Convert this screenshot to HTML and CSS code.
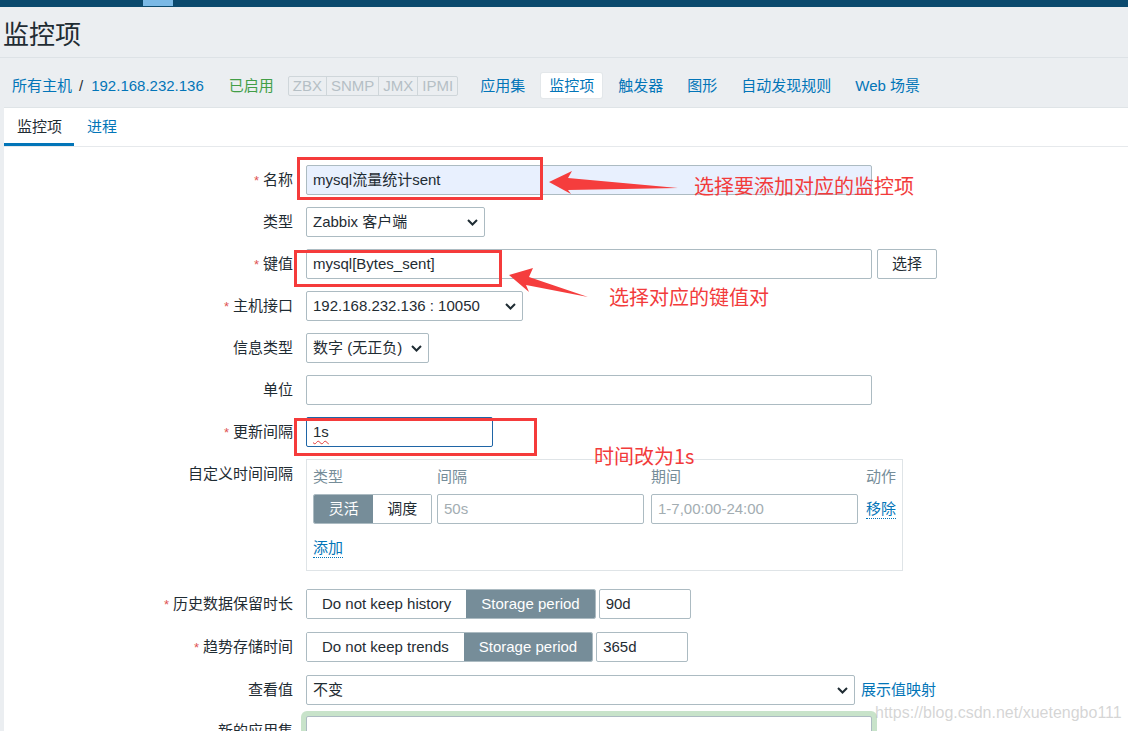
FILE: index.html
```html
<!DOCTYPE html>
<html lang="zh-CN">
<head>
<meta charset="utf-8">
<title>监控项</title>
<link rel="stylesheet" href="styles.css">
</head>
<body>
<div class="topbar"><span class="topbar-mark"></span></div>
<header class="page-head"><h1>监控项</h1></header>
<nav class="host-nav">
  <a class="link">所有主机</a><span class="sep">/</span><a class="link">192.168.232.136</a>
  <span class="status-on">已启用</span>
  <span class="avail"><span>ZBX</span><span>SNMP</span><span>JMX</span><span>IPMI</span></span>
  <ul class="host-tabs">
    <li>应用集</li>
    <li class="active">监控项</li>
    <li>触发器</li>
    <li>图形</li>
    <li>自动发现规则</li>
    <li>Web 场景</li>
  </ul>
</nav>
<main class="content">
  <div class="tabs"><span class="tab active">监控项</span><span class="tab">进程</span></div>
  <div class="form">
    <div class="row"><label class="lbl"><i class="req">*</i>名称</label><div class="input autofill w-full">mysql流量统计sent</div></div>
    <div class="row"><label class="lbl">类型</label><div class="select w-type"><span>Zabbix 客户端</span><svg class="chev" width="11" height="7" viewBox="0 0 11 7"><path d="M1 1 L5.5 5.5 L10 1" fill="none" stroke="#1f2c33" stroke-width="2"/></svg></div></div>
    <div class="row"><label class="lbl"><i class="req">*</i>键值</label><div class="input w-full">mysql[Bytes_sent]</div><span class="btn">选择</span></div>
    <div class="row"><label class="lbl"><i class="req">*</i>主机接口</label><div class="select w-iface"><span>192.168.232.136 : 10050</span><svg class="chev" width="11" height="7" viewBox="0 0 11 7"><path d="M1 1 L5.5 5.5 L10 1" fill="none" stroke="#1f2c33" stroke-width="2"/></svg></div></div>
    <div class="row"><label class="lbl">信息类型</label><div class="select w-info"><span>数字 (无正负)</span><svg class="chev" width="11" height="7" viewBox="0 0 11 7"><path d="M1 1 L5.5 5.5 L10 1" fill="none" stroke="#1f2c33" stroke-width="2"/></svg></div></div>
    <div class="row"><label class="lbl">单位</label><div class="input w-full"></div></div>
    <div class="row"><label class="lbl"><i class="req">*</i>更新间隔</label><div class="input focus w-delay"><span class="spell">1s</span></div></div>
    <div class="row row-custom"><label class="lbl">自定义时间间隔</label>
      <div class="intervals">
        <div class="iv-grid">
          <span class="th">类型</span><span class="th">间隔</span><span class="th">期间</span><span class="th">动作</span>
          <span class="seg seg-small"><span class="on">灵活</span><span>调度</span></span>
          <span class="input ph w-iv">50s</span>
          <span class="input ph w-iv">1-7,00:00-24:00</span>
          <a class="dlink">移除</a>
        </div>
        <a class="dlink add">添加</a>
      </div>
    </div>
    <div class="row row-wide"><label class="lbl"><i class="req">*</i>历史数据保留时长</label><span class="seg"><span>Do not keep history</span><span class="on">Storage period</span></span><div class="input w-period">90d</div></div>
    <div class="row row-wide"><label class="lbl"><i class="req">*</i>趋势存储时间</label><span class="seg"><span>Do not keep trends</span><span class="on">Storage period</span></span><div class="input w-period">365d</div></div>
    <div class="row row-wide"><label class="lbl">查看值</label><div class="select w-map"><span>不变</span><svg class="chev" width="11" height="7" viewBox="0 0 11 7"><path d="M1 1 L5.5 5.5 L10 1" fill="none" stroke="#1f2c33" stroke-width="2"/></svg></div><a class="link map-link">展示值映射</a></div>
    <div class="row row-app"><label class="lbl">新的应用集</label><div class="input new-app w-full"></div></div>
  </div>
</main>

<div class="annot">
  <svg class="annot-svg" width="1128" height="731" viewBox="0 0 1128 731">
    <g fill="none" stroke="#f53b3b" stroke-width="3">
      <rect x="298.5" y="158.5" width="243" height="40"/>
      <rect x="295.5" y="251.5" width="205" height="34"/>
      <rect x="295.5" y="419.5" width="240" height="35"/>
    </g>
    <g fill="#f53d3d">
      <polygon points="549,182 572,171 568,178 678,188 568,190 571,194"/>
      <polygon points="509,275 533,268 529,277 588,297 526,285 529,292"/>
    </g>
  </svg>
  <span class="note note1">选择要添加对应的监控项</span>
  <span class="note note2">选择对应的键值对</span>
  <span class="note note3">时间改为1s</span>
</div>
<div class="watermark">https://blog.csdn.net/xuetengbo111</div>
</body>
</html>
```
FILE: styles.css
```css
* { box-sizing: border-box; }
html, body { margin: 0; padding: 0; }
body {
  background: #ebeef1;
  font-family: "Liberation Sans", "Noto Sans CJK SC", sans-serif;
  font-size: 15px;
  color: #1f2c33;
  width: 1128px;
  height: 731px;
  overflow: hidden;
  position: relative;
}
.topbar { height: 7px; background: #0b4a6e; }
.topbar-mark { display: block; margin-left: 143px; width: 30px; height: 6px; background: #7ab9e6; }

.page-head { padding: 13px 0 7px 3px; border-bottom: 1px solid #dde2e6; height: 51px; }
.page-head h1 { margin: 0; font-size: 26px; font-weight: normal; line-height: 30px; height: 30px; color: #1f2c33; }

.host-nav { display: flex; align-items: center; height: 49px; padding: 15px 0 9px 12px; line-height: 25px; }
.link { color: #0275b8; text-decoration: none; }
.sep { margin: 0 8px 0 7px; color: #1f2c33; }
.status-on { margin-left: 25px; color: #429e47; }
.avail { margin-left: 14px; display: flex; height: 20px; border: 1px solid #cfd6da; border-radius: 2px; line-height: 18px; color: #b5bfc5; }
.avail span { padding: 0 4px; }
.avail span + span { border-left: 1px solid #cfd6da; }
.host-tabs { display: flex; gap: 8px; margin: 0 0 0 14px; padding: 0; list-style: none; }
.host-tabs li { padding: 0 8px; height: 25px; line-height: 25px; color: #0275b8; border-radius: 2px; }
.host-tabs li.active { background: #fff; box-shadow: 0 0 0 1px #e3e7ea; }

.content { margin-left: 4px; background: #fff; border-top: 1px solid #dfe4e7; height: 624px; }
.tabs { display: flex; height: 39px; border-bottom: 1px solid #e6e9ec; }
.tab { height: 38px; padding: 9px 12px 0 13px; line-height: 20px; color: #0275b8; border-bottom: 3px solid transparent; }
.tab.active { color: #1f2c33; border-bottom-color: #0275b8; }

.form { padding-top: 18px; }
.row { display: flex; align-items: flex-start; margin-bottom: 12px; }
.row-custom { margin-bottom: 18px; }
.row-wide { margin-bottom: 13px; }
.row-app { margin-top: -2px; }
.lbl { flex: 0 0 289px; height: 30px; margin-right: 13px; text-align: right; line-height: 30px; color: #1f2c33; white-space: nowrap; }
.req { font-style: normal; color: #e05454; font-size: 13px; line-height: 1; margin-right: 4px; }

.input {
  display: block;
  height: 30px;
  border: 1px solid #acbbc2;
  border-radius: 2px;
  background: #fff;
  padding: 0 6px;
  line-height: 28px;
  color: #1f2c33;
  white-space: nowrap;
  overflow: hidden;
}
.autofill { background: #e8f0fe; }
.focus { border-color: #1f65a6; }
.ph { color: #a3adb2; }
.w-full { width: 566px; }
.w-delay { width: 187px; }
.w-iv { width: 207px; }
.w-period { width: 92px; margin-left: 3px; }
.spell { text-decoration: underline wavy #e23c3c; text-decoration-skip-ink: none; text-underline-offset: 3px; text-decoration-thickness: 1px; }

.btn { margin-left: 5px; width: 60px; height: 30px; border: 1px solid #acbbc2; border-radius: 2px; line-height: 28px; text-align: center; background: #fff; color: #1f2c33; }

.select {
  display: flex;
  align-items: center;
  justify-content: space-between;
  height: 30px;
  border: 1px solid #acbbc2;
  border-radius: 2px;
  background: #fff;
  padding: 0 6px;
  line-height: 28px;
  white-space: nowrap;
}
.chev { flex: 0 0 auto; }
.w-type { width: 179px; }
.w-iface { width: 217px; }
.w-info { width: 123px; }
.w-map { width: 549px; }
.map-link { margin-left: 6px; line-height: 30px; height: 30px; }

.intervals { width: 597px; height: 112px; border: 1px solid #dfe4e7; padding: 8px 6px 0; }
.iv-grid { display: grid; grid-template-columns: 124px 214px 215px 1fr; grid-template-rows: 18px 30px; row-gap: 8px; align-items: center; }
.th { color: #768d99; line-height: 18px; height: 18px; }
.dlink { color: #0275b8; text-decoration: none; border-bottom: 1px dotted #0275b8; line-height: 19px; height: 20px; justify-self: start; }
.add { display: inline-block; margin-top: 14px; }

.seg { display: flex; height: 30px; border: 1px solid #acbbc2; border-radius: 2px; line-height: 28px; overflow: hidden; }
.seg span { padding: 0 15px; color: #1f2c33; background: #fff; }
.seg span.on { background: #768d99; color: #fff; }
.seg-small { width: 119px; }
.seg-small span { width: 60px; padding: 0; text-align: center; }
.seg-small span + span { width: 58px; }

.new-app { height: 40px; box-shadow: 0 0 0 5px #c8e3ca; }

.annot { position: absolute; left: 0; top: 0; width: 1128px; height: 731px; pointer-events: none; }
.annot-svg { position: absolute; left: 0; top: 0; }
.note { position: absolute; color: #f23b3b; font-size: 20px; line-height: 24px; font-family: "Noto Sans CJK SC", "Liberation Sans", sans-serif; white-space: nowrap; }
.note1 { left: 694px; top: 174px; }
.note2 { left: 609px; top: 285px; }
.note3 { left: 594px; top: 444px; }
.watermark { position: absolute; left: 875px; top: 703px; font-size: 16px; line-height: 20px; color: rgba(185, 185, 185, 0.6); white-space: nowrap; }
```
